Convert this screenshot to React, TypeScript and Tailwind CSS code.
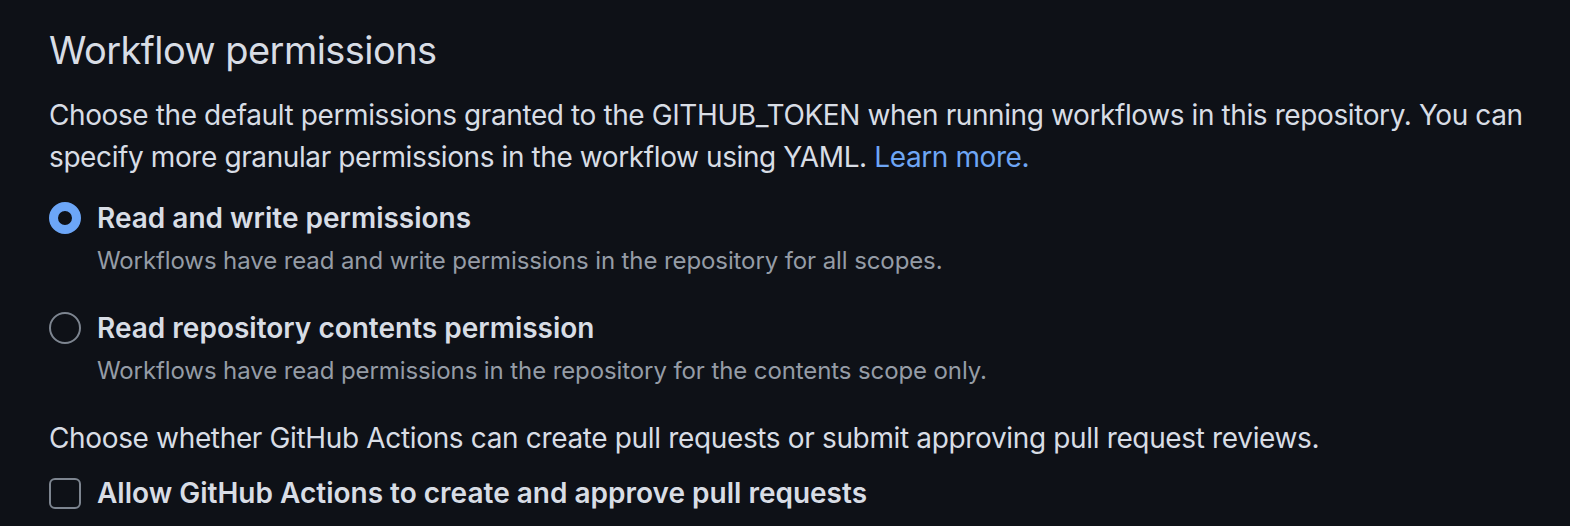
export default function App() {
  return (
    <div className="min-h-[526px] w-full bg-[#0e1117] text-[#d8dde5] font-['Inter','Noto_Sans',sans-serif] pl-[49px] pt-[22px]">
      <h2 className="text-[38px] leading-[56px] font-normal tracking-[-0.55px]">Workflow permissions</h2>
      <p className="mt-[16px] text-[28px] leading-[42px] tracking-[-0.4px] whitespace-nowrap">
        Choose the default permissions granted to the GITHUB_TOKEN when running workflows in this repository. You can
        <br />
        specify more granular permissions in the workflow using YAML.{" "}
        <a className="text-[#6ea6f5]">Learn more.</a>
      </p>

      <div className="mt-[19px] flex flex-col gap-[28px]">
        <div className="flex gap-[16px]">
          <span className="mt-[5px] h-[32px] w-[32px] shrink-0 rounded-full border-[9px] border-[#6ca6f7] bg-[#0e1117]" />
          <div>
            <div className="text-[28px] leading-[42px] font-semibold">Read and write permissions</div>
            <div className="mt-[4px] text-[24px] leading-[36px] tracking-[-0.1px] text-[#959ca6]">
              Workflows have read and write permissions in the repository for all scopes.
            </div>
          </div>
        </div>
        <div className="flex gap-[16px]">
          <span className="mt-[5px] h-[32px] w-[32px] shrink-0 rounded-full border-[2px] border-[#7d8590]" />
          <div>
            <div className="text-[28px] leading-[42px] font-semibold">Read repository contents permission</div>
            <div className="mt-[4px] text-[24px] leading-[36px] tracking-[-0.1px] text-[#959ca6]">
              Workflows have read permissions in the repository for the contents scope only.
            </div>
          </div>
        </div>
      </div>

      <p className="mt-[28px] text-[28px] leading-[42px] tracking-[-0.35px]">
        Choose whether GitHub Actions can create pull requests or submit approving pull request reviews.
      </p>
      <div className="mt-[13px] flex items-center gap-[16px]">
        <span className="h-[31px] w-[32px] shrink-0 rounded-[6px] border-[2px] border-[#7d8590]" />
        <div className="text-[28px] leading-[42px] font-semibold">Allow GitHub Actions to create and approve pull requests</div>
      </div>
    </div>
  );
}
